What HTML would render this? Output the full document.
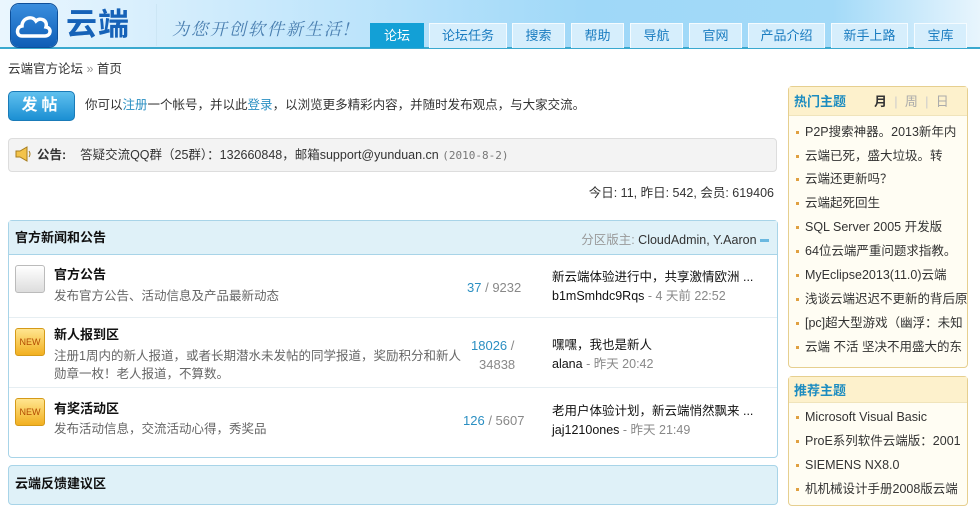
<!DOCTYPE html>
<html><head><meta charset="utf-8"><style>
*{margin:0;padding:0;box-sizing:border-box}
body{width:980px;height:493px;overflow:hidden;background:#fff;font-family:"Liberation Sans","Noto Sans CJK SC",sans-serif;font-size:12px;line-height:16px;color:#333;position:relative}
.a{position:absolute;white-space:nowrap}
.hdr{position:absolute;left:0;top:0;width:980px;height:49px;background:linear-gradient(90deg,#eaf6fe 0,#bfe5fb 35%,#9fd8f8 60%,#a3daf8 85%,#e8f5fd 100%);border-bottom:2px solid #3aa9cf}
.tab{position:absolute;top:23px;height:25px;background:#d6eefc;border:1px solid #f4fbff;border-bottom:none;color:#1a7cc0;font-size:13px;text-align:center;line-height:24px}
.tab.on{background:#13a0d6;color:#fff;border-color:#13a0d6}
.box{position:absolute;border:1px solid #a8d4e8;border-radius:4px;background:#fff}
.bh{background:#dff1f8;border-bottom:1px solid #a8d4e8;height:34px}
.row{position:absolute;left:0;width:768px;border-bottom:1px solid #e6eef2}
.t{font-weight:bold;font-size:13px;color:#111}
.g{color:#666}
.lb{color:#2b8fc2}
.side{position:absolute;left:788px;width:180px;border:1px solid #e6cf8f;border-radius:4px;background:#fffdf3}
.sh{background:#fdf1cc;height:29px;border-bottom:1px solid #f0e4bb}
.li{position:absolute;left:16px;font-size:12.5px;line-height:16px;color:#333;white-space:nowrap}
.li:before{content:"";position:absolute;left:-9px;top:7px;width:3px;height:3px;background:#e0a040}
.ic{position:absolute;left:6px;width:30px;height:28px;border-radius:3px}
</style></head><body>
<div class="hdr"></div>
<div class="a" style="left:11px;top:4px;width:46px;height:43px;border-radius:8px;background:linear-gradient(#3a8ede,#0f5db6);box-shadow:0 0 0 1px #0d4f9a"></div>
<svg class="a" style="left:14px;top:10px" width="40" height="30" viewBox="0 0 40 30"><path d="M8 26 C2 26 2 17 8 16 C8 8 18 5 22 11 C26 7 34 10 32 17 C38 18 37 26 31 26 Z" fill="none" stroke="#fff" stroke-width="3.5"/></svg>
<div class="a" style="left:66px;top:6px;font-size:31px;font-weight:bold;color:#1662b8;letter-spacing:1px;line-height:38px">云端</div>
<div class="a" style="left:156px;top:4px;width:1px;height:42px;background:#cce6f5"></div>
<div class="a" style="left:172px;top:18px;font-size:17px;line-height:20px;color:#4a7fb0;font-style:italic;letter-spacing:2px;font-family:'Noto Serif CJK SC',serif">为您开创软件新生活!</div>
<div class="tab on" style="left:370px;width:54px">论坛</div>
<div class="tab" style="left:429px;width:78px">论坛任务</div>
<div class="tab" style="left:512px;width:53px">搜索</div>
<div class="tab" style="left:571px;width:53px">帮助</div>
<div class="tab" style="left:630px;width:53px">导航</div>
<div class="tab" style="left:689px;width:53px">官网</div>
<div class="tab" style="left:748px;width:77px">产品介绍</div>
<div class="tab" style="left:831px;width:77px">新手上路</div>
<div class="tab" style="left:914px;width:53px">宝库</div>

<div class="a" style="left:8px;top:61px;font-size:12.5px">云端官方论坛 <span style="color:#999">»</span> 首页</div>
<div class="a" style="left:8px;top:91px;width:67px;height:30px;border-radius:5px;background:linear-gradient(#5fc0ee,#1b8fd3);border:1px solid #1a7bb8;color:#fff;font-size:16px;font-weight:bold;text-align:center;line-height:28px;letter-spacing:4px">发帖</div>
<div class="a" style="left:85px;top:97px;font-size:12.5px">你可以<span class="lb">注册</span>一个帐号，并以此<span class="lb">登录</span>，以浏览更多精彩内容，并随时发布观点，与大家交流。</div>

<div class="a" style="left:8px;top:138px;width:769px;height:34px;background:#f3f3f3;border:1px solid #ddd;border-radius:4px"></div>
<svg class="a" style="left:14px;top:146px" width="18" height="16" viewBox="0 0 18 16"><path d="M2 5h4l7-4v14l-7-4H2z" fill="#f3c34a" stroke="#a77d1e"/><path d="M15 5q2 3 0 6" stroke="#a77d1e" fill="none"/></svg>
<div class="a" style="left:37px;top:147px;font-size:12.5px"><b>公告:</b>&nbsp;&nbsp;&nbsp; 答疑交流QQ群（25群）：132660848，邮箱support@yunduan.cn <span style="color:#777;font-size:11px;font-family:'DejaVu Sans Mono',monospace">(2010-8-2)</span></div>
<div class="a" style="right:206px;top:185px;font-size:12.5px">今日: 11, 昨日: 542, 会员: 619406</div>

<div class="box" style="left:8px;top:220px;width:770px;height:238px">
<div class="bh"></div>
<div class="a t" style="left:6px;top:9px">官方新闻和公告</div>
<div class="a" style="right:8px;top:11px;font-size:12.5px"><span style="color:#999">分区版主:</span> CloudAdmin, Y.Aaron <span style="display:inline-block;width:9px;height:3px;background:#6ab8e0;vertical-align:middle"></span></div>
<div class="row" style="top:34px;height:63px">
<div class="ic" style="top:10px;background:linear-gradient(#fff,#ddd);border:1px solid #bbb"></div>
<div class="a t" style="left:45px;top:12px">官方公告</div>
<div class="a g" style="left:45px;top:33px;font-size:12.5px">发布官方公告、活动信息及产品最新动态</div>
<div class="a" style="left:458px;top:25px;font-size:13px"><span class="lb">37</span> <span style="color:#888">/ 9232</span></div>
<div class="a" style="left:543px;top:14px;font-size:12.5px;color:#111">新云端体验进行中，共享激情欧洲 ...</div>
<div class="a" style="left:543px;top:33px;font-size:12.5px;color:#111">b1mSmhdc9Rqs <span style="color:#888">- 4 天前 22:52</span></div>
</div>
<div class="row" style="top:97px;height:70px">
<div class="ic" style="top:10px;background:linear-gradient(#ffe590,#f2b020);border:1px solid #d59a18;color:#b24a00;font-size:9px;line-height:26px;text-align:center">NEW</div>
<div class="a t" style="left:45px;top:9px">新人报到区</div>
<div class="a g" style="left:45px;top:29px;font-size:12.5px;line-height:18px;white-space:normal;width:415px">注册1周内的新人报道，或者长期潜水未发帖的同学报道，奖励积分和新人勋章一枚！老人报道，不算数。</div>
<div class="a" style="left:462px;top:20px;font-size:13px"><span class="lb">18026</span> <span style="color:#888">/</span></div>
<div class="a" style="left:470px;top:39px;font-size:13px;color:#888">34838</div>
<div class="a" style="left:543px;top:19px;font-size:12.5px;color:#111">嘿嘿，我也是新人</div>
<div class="a" style="left:543px;top:38px;font-size:12.5px;color:#111">alana <span style="color:#888">- 昨天 20:42</span></div>
</div>
<div class="row" style="top:167px;height:70px;border:none">
<div class="ic" style="top:10px;background:linear-gradient(#ffe590,#f2b020);border:1px solid #d59a18;color:#b24a00;font-size:9px;line-height:26px;text-align:center">NEW</div>
<div class="a t" style="left:45px;top:13px">有奖活动区</div>
<div class="a g" style="left:45px;top:33px;font-size:12.5px">发布活动信息，交流活动心得，秀奖品</div>
<div class="a" style="left:454px;top:25px;font-size:13px"><span class="lb">126</span> <span style="color:#888">/ 5607</span></div>
<div class="a" style="left:543px;top:15px;font-size:12.5px;color:#111">老用户体验计划，新云端悄然飘来 ...</div>
<div class="a" style="left:543px;top:34px;font-size:12.5px;color:#111">jaj1210ones <span style="color:#888">- 昨天 21:49</span></div>
</div>
</div>
<div class="box" style="left:8px;top:465px;width:770px;height:40px;background:#dff1f8"><div class="a t" style="left:6px;top:10px">云端反馈建议区</div></div>

<div class="side" style="top:86px;height:282px">
<div class="sh"></div>
<div class="a" style="left:5px;top:7px;font-weight:bold;font-size:13px;color:#1c8cc0">热门主题</div>
<div class="a" style="left:85px;top:7px;font-size:13px"><b>月</b> <span style="color:#ccc">&nbsp;|&nbsp;</span> <span style="color:#aaa">周</span> <span style="color:#ccc">&nbsp;|&nbsp;</span> <span style="color:#aaa">日</span></div>
<div class="li" style="top:37px">P2P搜索神器。2013新年内</div>
<div class="li" style="top:61px">云端已死，盛大垃圾。转</div>
<div class="li" style="top:84px">云端还更新吗？</div>
<div class="li" style="top:108px">云端起死回生</div>
<div class="li" style="top:132px">SQL Server 2005 开发版</div>
<div class="li" style="top:156px">64位云端严重问题求指教。</div>
<div class="li" style="top:180px">MyEclipse2013(11.0)云端</div>
<div class="li" style="top:204px">浅谈云端迟迟不更新的背后原</div>
<div class="li" style="top:228px">[pc]超大型游戏（幽浮：未知</div>
<div class="li" style="top:252px">云端 不活 坚决不用盛大的东</div>
</div>
<div class="side" style="top:376px;height:130px">
<div class="sh" style="height:26px"></div>
<div class="a" style="left:5px;top:6px;font-weight:bold;font-size:13px;color:#1c8cc0">推荐主题</div>
<div class="li" style="top:32px">Microsoft Visual Basic</div>
<div class="li" style="top:56px">ProE系列软件云端版：2001</div>
<div class="li" style="top:80px">SIEMENS NX8.0</div>
<div class="li" style="top:104px">机机械设计手册2008版云端</div>
</div>
</body></html>
